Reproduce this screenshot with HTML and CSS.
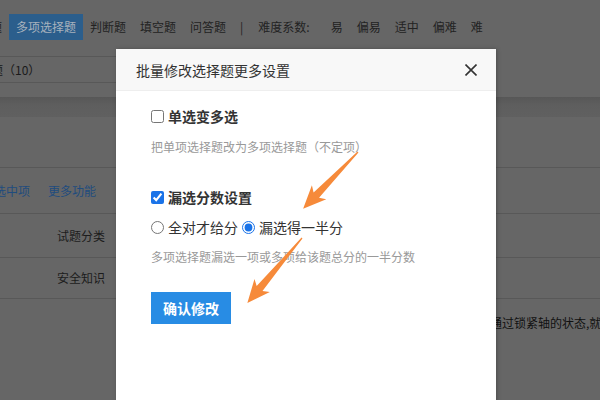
FILE: index.html
```html
<!DOCTYPE html>
<html lang="zh-CN">
<head>
    <meta charset="UTF-8">
    <meta name="viewport" content="width=device-width, initial-scale=1.0">
    <title>批量修改选择题更多设置</title>
    <link rel="stylesheet" href="styles.css">
</head>
<body>
    <!-- page behind the dialog (already dimmed by the mask) -->
    <div class="page">
        <div class="type-bar">
            <span class="type-item">单项选择题</span>
            <span class="type-item active">多项选择题</span>
            <span class="type-item">判断题</span>
            <span class="type-item">填空题</span>
            <span class="type-item">问答题</span>
            <span class="divider">|</span>
            <span class="level-label">难度系数:</span>
            <span class="type-item">易</span>
            <span class="type-item">偏易</span>
            <span class="type-item">适中</span>
            <span class="type-item">偏难</span>
            <span class="type-item">难</span>
        </div>

        <div class="count-row">多项选择题（10）</div>
        <div class="sticky-band"></div>
        <div class="spacer-row"></div>

        <div class="table-row action-row">
            <a class="link">取消选中项</a>
            <a class="link">更多功能</a>
        </div>
        <div class="table-row">
            <span class="cell-label">试题分类</span>
        </div>
        <div class="table-row">
            <span class="cell-label">安全知识</span>
        </div>
        <div class="table-row question-row">
            <span class="cell-label"></span>
            <span class="cell-text">设备运行中出现异常振动时，操作人员应停机检查，确认各部件情况后通过锁紧轴的状态,就可以判断</span>
        </div>
    </div>

    <!-- dialog -->
    <div class="dialog">
        <div class="dialog-header">
            <span class="dialog-title">批量修改选择题更多设置</span>
            <span class="dialog-close">
                <svg width="12" height="12" viewBox="0 0 12 12">
                    <path d="M0.5 0.5 L11.5 11.5 M11.5 0.5 L0.5 11.5" stroke="#333" stroke-width="1.6" fill="none"/>
                </svg>
            </span>
        </div>
        <div class="dialog-body">
            <label class="option"><input type="checkbox"><span>单选变多选</span></label>
            <p class="hint">把单项选择题改为多项选择题（不定项）</p>

            <label class="option option-second"><input type="checkbox" checked><span>漏选分数设置</span></label>
            <div class="radio-row">
                <label class="radio"><input type="radio" name="score"><span>全对才给分</span></label>
                <label class="radio"><input type="radio" name="score" checked><span>漏选得一半分</span></label>
            </div>
            <p class="hint hint-second">多项选择题漏选一项或多项给该题总分的一半分数</p>

            <button class="btn-primary">确认修改</button>
        </div>
    </div>

    <!-- annotation arrows -->
    <svg class="arrows" width="600" height="400" viewBox="0 0 600 400">
        <polygon transform="translate(358 152) rotate(134)" points="0,-0.6 60,-3.8 56,-10 79,0 56,10 60,3.8 0,0.6" fill="#f68a3a"/>
        <polygon transform="translate(302 238) rotate(130)" points="0,-0.6 66,-3.8 62,-10 85,0 62,10 66,3.8 0,0.6" fill="#f68a3a"/>
    </svg>
</body>
</html>
```

FILE: styles.css
```css
* {
    box-sizing: border-box;
    margin: 0;
    padding: 0;
}

body {
    width: 600px;
    height: 400px;
    overflow: hidden;
    position: relative;
    background-color: #666;
    font-family: "Noto Sans CJK SC", "Noto Sans", sans-serif;
    font-size: 12px;
    color: #1c1c1c;
}

/* ---------- dimmed page ---------- */

.page {
    margin-left: -65px;
    width: 700px;
}

.type-bar {
    display: flex;
    align-items: center;
    height: 56px;
    padding-bottom: 2px;
    line-height: 26px;
    color: #222;
}

.type-item {
    padding: 0 7px;
}

.type-item.active {
    background-color: #2b5e8c;
    color: #a7b2bd;
}

.divider {
    padding: 0 7px;
}

.level-label {
    padding: 0 14px 0 8px;
}

.count-row {
    width: 440px;
    height: 27px;
    padding-left: 8px;
    border-top: 1px solid #585858;
    border-bottom: 1px solid #585858;
    line-height: 25px;
    color: #1a1a1a;
}

.sticky-band {
    height: 20px;
    margin-top: 14px;
    background: linear-gradient(#575757, #5e5e5e 40%, #606060);
}

.spacer-row {
    height: 50px;
}

.table-row {
    display: flex;
    align-items: center;
    border-top: 1px solid #585858;
}

.action-row {
    height: 46px;
    padding-left: 35px;
    gap: 18px;
}

.link {
    color: #1f4c7e;
}

.table-row .cell-label {
    flex-shrink: 0;
    width: 170px;
    text-align: right;
}

.table-row:nth-child(6) {
    height: 44px;
}

.table-row:nth-child(7) {
    height: 41px;
    padding-bottom: 2px;
}

.question-row {
    align-items: flex-start;
    padding-top: 15px;
    height: 110px;
    border-top: 1px solid #585858;
}

.cell-text {
    margin-left: 13px;
    white-space: nowrap;
    color: #111;
}

/* ---------- dialog ---------- */

.dialog {
    position: absolute;
    left: 116px;
    top: 49px;
    width: 380px;
    height: 380px;
    background-color: #fff;
    box-shadow: 1px 0 4px rgba(0, 0, 0, 0.25);
}

.dialog-header {
    display: flex;
    align-items: center;
    justify-content: space-between;
    height: 42px;
    padding: 0 19px 0 20px;
    background-color: #f8f8f8;
    border-bottom: 1px solid #eee;
}

.dialog-title {
    font-size: 14px;
    color: #333;
}

.dialog-close {
    display: flex;
}

.dialog-body {
    padding: 15px 35px;
}

.option,
.radio {
    display: flex;
    align-items: center;
    gap: 4px;
    height: 20px;
    font-size: 14px;
    color: #333;
}

.option {
    font-weight: bold;
}

.option input,
.radio input {
    width: 13px;
    height: 13px;
    margin: 0;
    accent-color: #1a73e8;
}

.option-second {
    margin-top: 31px;
}

.hint {
    margin-top: 12px;
    line-height: 18px;
    font-size: 12px;
    color: #999;
}

.hint-second {
    margin-top: 11px;
}

.radio-row {
    display: flex;
    gap: 4px;
    margin-top: 10px;
}

.btn-primary {
    display: block;
    width: 80px;
    height: 32px;
    margin-top: 26px;
    border: none;
    background-color: #288ce4;
    color: #fff;
    font-family: inherit;
    font-size: 14px;
    font-weight: bold;
}

/* ---------- arrows ---------- */

.arrows {
    position: absolute;
    left: 0;
    top: 0;
    pointer-events: none;
}
```
